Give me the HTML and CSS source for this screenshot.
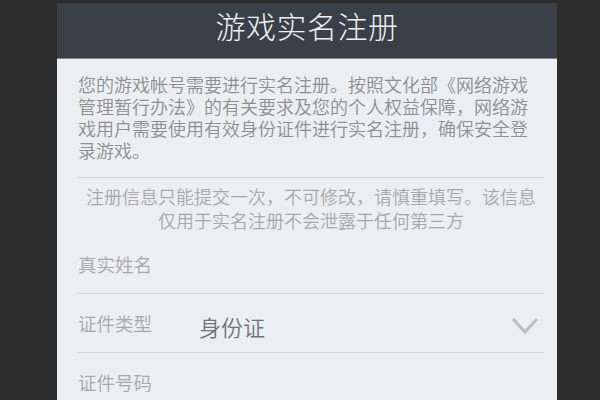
FILE: index.html
```html
<!DOCTYPE html>
<html lang="zh-CN">
<head>
<meta charset="utf-8">
<title>游戏实名注册</title>
<link rel="stylesheet" href="styles.css">
</head>
<body>
<div class="panel">
  <header class="header">
    <h1 class="title">游戏实名注册</h1>
  </header>
  <main class="content">
    <p class="intro">您的游戏帐号需要进行实名注册。按照文化部《网络游戏管理暂行办法》的有关要求及您的个人权益保障，网络游戏用户需要使用有效身份证件进行实名注册，确保安全登录游戏。</p>
    <p class="notice">注册信息只能提交一次，不可修改，请慎重填写。该信息<br>仅用于实名注册不会泄露于任何第三方</p>
    <div class="row">
      <span class="label">真实姓名</span>
    </div>
    <div class="row">
      <span class="label">证件类型</span>
      <span class="value">身份证</span>
      <svg class="chevron" width="28" height="18" viewBox="0 0 28 18"><polyline points="2,2 14,15 26,2" fill="none" stroke="#bcbec0" stroke-width="3"/></svg>
    </div>
    <div class="row">
      <span class="label">证件号码</span>
    </div>
  </main>
</div>
</body>
</html>
```
FILE: styles.css
```css
html, body {
  margin: 0;
  padding: 0;
  background: #2c2c2c;
  height: 100%;
  overflow: hidden;
}
body {
  font-family: "Noto Sans CJK SC", "Noto Sans", sans-serif;
}
.panel {
  margin: 3px 0 0 57px;
  width: 500px;
  background: #eceff2;
  min-height: 420px;
}
.header {
  height: 55px;
  background: #394047;
  border-bottom: 1px solid #7d848b;
}
.title {
  margin: 0;
  text-align: center;
  font-size: 30px;
  font-weight: 300;
  line-height: 44px;
  color: #eef0f2;
  letter-spacing: 0.5px;
}
.content {
  padding: 0 13px 0 21px;
}
.intro {
  margin: 0;
  padding: 14px 0 16px;
  font-size: 18px;
  font-weight: 350;
  line-height: 22px;
  color: #8d8f91;
  border-bottom: 1px solid #d3d6d9;
}
.notice {
  margin: 0;
  padding: 7px 0 3px;
  font-size: 18px;
  font-weight: 350;
  line-height: 23.5px;
  text-align: center;
  color: #a7a9ab;
}
.row {
  display: flex;
  align-items: center;
  height: 58px;
  border-bottom: 1px solid #d3d6d9;
}
.label {
  width: 121px;
  flex: none;
  font-size: 18.5px;
  font-weight: 350;
  color: #a6a8aa;
}
.value {
  flex: 1;
  font-size: 22px;
  font-weight: 350;
  color: #727476;
  padding-top: 5px;
}
.chevron {
  margin-right: 5px;
  margin-top: 6px;
}
```
